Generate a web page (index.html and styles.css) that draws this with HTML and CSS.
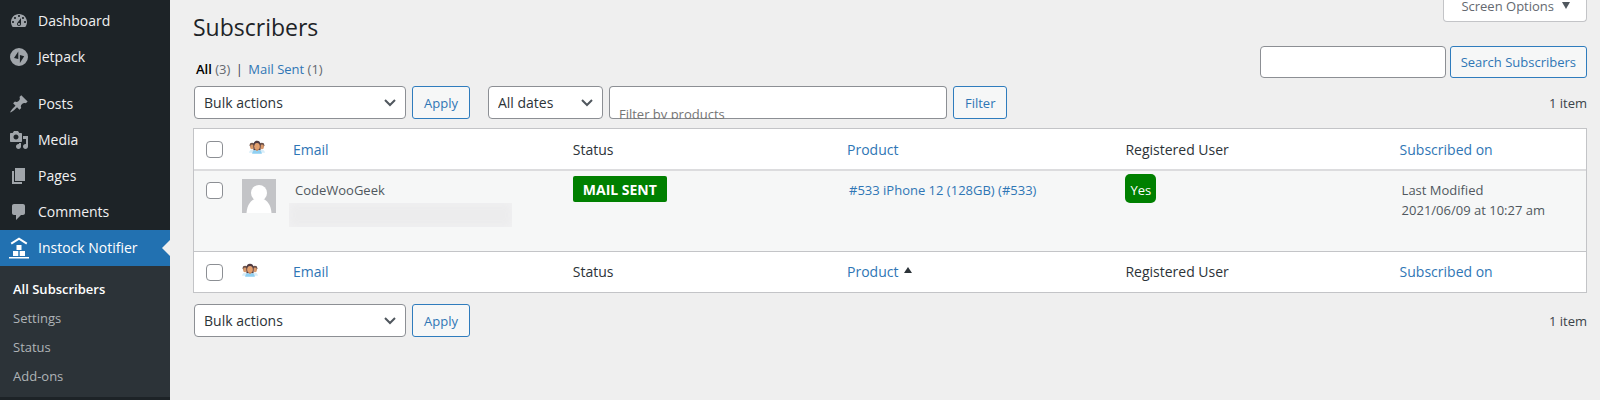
FILE: index.html
```html
<!DOCTYPE html>
<html lang="en">
<head>
<meta charset="utf-8">
<title>Subscribers</title>
<link rel="stylesheet" href="styles.css">
</head>
<body>
<svg class="sprite" aria-hidden="true">
  <symbol id="people" viewBox="0 0 18 16">
    <circle cx="3.5" cy="5.5" r="2.8" fill="#6b5149"/>
    <circle cx="14.5" cy="5.5" r="2.8" fill="#6b5149"/>
    <ellipse cx="3.4" cy="7.3" rx="2.2" ry="2.7" fill="#d99a6c"/>
    <ellipse cx="14.6" cy="7.3" rx="2.2" ry="2.7" fill="#d99a6c"/>
    <path d="M0 14c.5-3 2-3.600 4-3.600h10c2 0 3.500.6 4 3.600z" fill="#d8edf8"/>
    <path d="M5 11V5C5 2 6.500 .5 9 .5S13 2 13 5v6z" fill="#4f3b42"/>
    <ellipse cx="9" cy="7" rx="3.2" ry="4" fill="#e3a06f"/>
    <path d="M8 10h2v2H8z" fill="#cf8b5b"/>
    <path d="M3.500 15c.2-3 1.500-4 4-4L9 12.200l1.500-1.200c2.500 0 3.800 1 4 4z" fill="#8fd0f2"/>
  </symbol>
</svg>
<div class="layout">
  <nav class="sidebar" aria-label="Main menu">
    <ul class="menu">
      <li><a class="menu-link" href="#"><svg class="icon" viewBox="0 0 20 20"><path d="M3.760 16h12.480c1.100-1.370 1.760-3.110 1.760-5 0-4.420-3.580-8-8-8s-8 3.580-8 8c0 1.890.66 3.630 1.760 5zM10 4c.55 0 1 .45 1 1s-.45 1-1 1-1-.45-1-1 .45-1 1-1zM6 6c.55 0 1 .45 1 1s-.45 1-1 1-1-.45-1-1 .45-1 1-1zm8 0c.55 0 1 .45 1 1s-.45 1-1 1-1-.45-1-1 .45-1 1-1zm-5.370 5.550L12 7v6c0 1.100-.9 2-2 2s-2-.9-2-2c0-.57.24-1.080.63-1.450zM4 10c.55 0 1 .45 1 1s-.45 1-1 1-1-.45-1-1 .45-1 1-1zm12 0c.55 0 1 .45 1 1s-.45 1-1 1-1-.45-1-1 .45-1 1-1zm-5 3c0-.55-.45-1-1-1s-1 .45-1 1 .45 1 1 1 1-.45 1-1z"/></svg>Dashboard</a></li>
      <li><a class="menu-link" href="#"><svg class="icon" viewBox="0 0 20 20"><path fill-rule="evenodd" d="M10 1a9 9 0 1 0 0 18 9 9 0 0 0 0-18zM9.300 4.500v7.500L5 10.900zM10.900 8.100l4.300 1.100-4.300 6.900z"/></svg>Jetpack</a></li>
      <li class="group-start"><a class="menu-link" href="#"><svg class="icon" viewBox="0 0 20 20"><path d="M10.440 3.020l1.820-1.820 6.360 6.350-1.830 1.820c-1.050-.68-2.480-.57-3.410.36l-.75.75c-.92.93-1.040 2.350-.35 3.410l-1.830 1.820-2.410-2.410-2.800 2.790c-.42.42-3.380 2.710-3.800 2.290s1.860-3.390 2.280-3.810l2.790-2.790L4.100 9.360l1.830-1.820c1.050.69 2.480.57 3.400-.36l.75-.75c.93-.92 1.050-2.350.36-3.410z"/></svg>Posts</a></li>
      <li><a class="menu-link" href="#"><svg class="icon" viewBox="0 0 20 20"><path d="M13 11V4c0-.55-.45-1-1-1h-1.670L9 1H5L3.670 3H2c-.55 0-1 .45-1 1v7c0 .55.45 1 1 1h10c.55 0 1-.45 1-1zM7 4.500c1.380 0 2.500 1.120 2.500 2.500S8.380 9.500 7 9.500 4.500 8.380 4.500 7 5.620 4.500 7 4.500zM14 6h5v10.500c0 1.380-1.120 2.500-2.500 2.500S14 17.880 14 16.500s1.120-2.500 2.500-2.500c.17 0 .34.02.5.05V9h-3V6zm-4 8.050V13h2v3.500c0 1.380-1.120 2.500-2.500 2.500S7 17.880 7 16.500 8.120 14 9.500 14c.17 0 .34.02.5.05z"/></svg>Media</a></li>
      <li><a class="menu-link" href="#"><svg class="icon" viewBox="0 0 20 20"><path d="M6 15V2h10v13H6zm-1 1h8v2H3V5h2v11z"/></svg>Pages</a></li>
      <li><a class="menu-link" href="#"><svg class="icon" viewBox="0 0 20 20"><path d="M5 2h9c1.100 0 2 .9 2 2v7c0 1.100-.9 2-2 2h-2l-5 5v-5H5c-1.100 0-2-.9-2-2V4c0-1.100.9-2 2-2z"/></svg>Comments</a></li>
      <li>
        <a class="menu-link current" href="#"><svg class="icon" viewBox="0 0 20 20"><path d="M2.200 5.700L10 .7l7.800 5" fill="none" stroke="#fff" stroke-width="2"/><path d="M7.500 7h5v5h-5zM4 13h5.300v5H4zM10.700 13H16v5h-5.300zM0 19h20v1.500H0z"/></svg>Instock Notifier</a>
        <ul class="submenu">
          <li><a class="active" href="#">All Subscribers</a></li>
          <li><a href="#">Settings</a></li>
          <li><a href="#">Status</a></li>
          <li><a href="#">Add-ons</a></li>
        </ul>
      </li>
    </ul>
  </nav>

  <main class="content">
    <header class="page-head">
      <div class="head-left">
        <h1>Subscribers</h1>
        <div class="views"><a class="view-current" href="#">All</a> <span class="count">(3)</span> <span class="bar">|</span> <a href="#">Mail Sent</a> <span class="count">(1)</span></div>
      </div>
      <div class="head-right">
        <button class="screen-options" type="button">Screen Options <svg class="caret" viewBox="0 0 8 7"><path d="M0 0h8L4 7z"/></svg></button>
        <form class="search">
          <input class="field" type="search" aria-label="Search Subscribers">
          <button class="button" type="button">Search Subscribers</button>
        </form>
      </div>
    </header>

    <div class="toolbar">
      <select class="select bulk" aria-label="Bulk action"><option>Bulk actions</option></select>
      <button class="button" type="button">Apply</button>
      <select class="select dates" aria-label="Filter by date"><option>All dates</option></select>
      <input class="products" type="text" placeholder="Filter by products" aria-label="Filter by products">
      <button class="button" type="button">Filter</button>
      <span class="total">1 item</span>
    </div>

    <table class="list">
      <colgroup><col class="c-check"><col class="c-icon"><col class="c-email"><col class="c-status"><col class="c-product"><col class="c-user"><col></colgroup>
      <thead>
        <tr>
          <th><input type="checkbox" aria-label="Select all"></th>
          <th class="icon-head"><svg class="people"><use href="#people"/></svg></th>
          <th><a href="#">Email</a></th>
          <th>Status</th>
          <th><a href="#">Product</a></th>
          <th>Registered User</th>
          <th><a href="#">Subscribed on</a></th>
        </tr>
      </thead>
      <tbody>
        <tr>
          <td><input type="checkbox" aria-label="Select CodeWooGeek"></td>
          <td class="avatar-cell"><svg class="avatar" viewBox="0 0 34 34"><path fill="#c3c4c7" d="M0 0h34v34H0z"/><circle cx="17" cy="14" r="8" fill="#fff"/><path fill="#fff" d="M4.500 34C5 26 9 21 13 20h8c4 1 8 6 8.500 14z"/></svg></td>
          <td class="text">CodeWooGeek<div class="redacted"></div></td>
          <td><span class="badge sent">MAIL SENT</span></td>
          <td class="text"><a href="#">#533 iPhone 12 (128GB) (#533)</a></td>
          <td><span class="badge yes">Yes</span></td>
          <td class="text">Last Modified<br>2021/06/09 at 10:27 am</td>
        </tr>
      </tbody>
      <tfoot>
        <tr>
          <th><input type="checkbox" aria-label="Select all"></th>
          <th><svg class="people"><use href="#people"/></svg></th>
          <th><a href="#">Email</a></th>
          <th>Status</th>
          <th><a href="#">Product <svg class="sort" viewBox="0 0 8 6"><path d="M4 0l4 6H0z"/></svg></a></th>
          <th>Registered User</th>
          <th><a href="#">Subscribed on</a></th>
        </tr>
      </tfoot>
    </table>

    <div class="toolbar bottom">
      <select class="select bulk" aria-label="Bulk action"><option>Bulk actions</option></select>
      <button class="button" type="button">Apply</button>
      <span class="total">1 item</span>
    </div>
  </main>
</div>
</body>
</html>
```
FILE: styles.css
```css
* { box-sizing: border-box; }

body {
  margin: 0;
  background: #efefef;
  color: #3c434a;
  font: 13px/20px "Segoe UI", "Open Sans", "Noto Sans", sans-serif;
}

a { color: #2f76b5; text-decoration: none; }
button, input, select { font-family: inherit; }
ul { margin: 0; padding: 0; list-style: none; }

.sprite { display: none; }

.layout { display: flex; min-height: 100vh; }

/* Sidebar */
.sidebar {
  flex: none;
  width: 170px;
  background: #1d2327;
}

.menu { padding-top: 3px; }
.group-start { margin-top: 11px; }

.menu-link {
  display: flex;
  align-items: center;
  gap: 9px;
  height: 36px;
  padding-left: 9px;
  color: #f0f0f1;
  font-size: 14px;
}

.icon { width: 20px; height: 20px; fill: #a0a5aa; overflow: visible; }

.current { position: relative; background: #2271b1; color: #fff; }
.current .icon { fill: #fff; }
.current::after {
  content: "";
  position: absolute;
  right: 0;
  top: 10px;
  border: 8px solid transparent;
  border-right-color: #efefef;
  border-left-width: 0;
}

.submenu { padding: 8px 0 7px; background: #2c3338; }
.submenu a {
  display: block;
  padding: 5px 13px 4px;
  color: #afb3b7;
  font-size: 13px;
}
.submenu .active { color: #fff; font-weight: 600; }

/* Page head */
.content { flex: 1; min-width: 0; padding: 0 13px 0 23px; }

.page-head { display: flex; justify-content: space-between; }

h1 {
  margin: 0;
  padding-top: 10px;
  color: #1d2327;
  font-size: 23px;
  font-weight: 400;
  line-height: 34px;
}

.views { padding: 15px 0 0 3px; }
.view-current { color: #000; font-weight: 600; }
.count { color: #646970; }
.bar { margin: 0 2px; }

.head-right { display: flex; flex-direction: column; align-items: flex-end; gap: 24px; }

.screen-options {
  display: flex;
  align-items: center;
  gap: 8px;
  height: 22px;
  padding: 0 16px 10px 17px;
  border: 1px solid #c3c4c7;
  border-top: 0;
  border-radius: 0 0 4px 4px;
  background: #fff;
  color: #646970;
  font-size: 13px;
  line-height: 12px;
}
.caret { width: 8px; height: 7px; fill: #50575e; }

.search { display: flex; gap: 4px; }

.field, .products, .select {
  border: 1px solid #8c8f94;
  border-radius: 4px;
  background: #fff;
}
.field { width: 186px; height: 32px; }

.button {
  padding: 0 11px;
  border: 1px solid #2f7cbd;
  border-radius: 3px;
  background: #f6f7f7;
  color: #2f76b5;
  font-size: 13px;
}
.search .button { padding: 0 10px; }

/* Toolbars */
.toolbar { display: flex; align-items: stretch; gap: 6px; height: 33px; margin-top: 7px; padding-left: 1px; }
.bottom { margin-top: 11px; }
.total { margin-left: auto; align-self: center; }

.select {
  appearance: none;
  padding: 0 24px 0 9px;
  color: #2c3338;
  font-size: 14px;
  background: #fff url("data:image/svg+xml,%3Csvg xmlns='http://www.w3.org/2000/svg' viewBox='0 0 12 8'%3E%3Cpath d='M1 1l5 5 5-5' fill='none' stroke='%2350575e' stroke-width='2'/%3E%3C/svg%3E") no-repeat right 9px center / 12px 8px;
}
.bulk { width: 212px; }
.dates { width: 115px; margin-left: 12px; }

.products {
  width: 338px;
  padding: 22px 10px 0;
  border: 0;
  box-shadow: inset 0 0 0 1px #8c8f94;
  font-size: 13px;
}
.products::placeholder { color: #757575; opacity: 1; }

/* List table */
.list {
  width: 100%;
  margin-top: 9px;
  table-layout: fixed;
  border: 1px solid #c3c4c7;
  border-spacing: 0;
  background: #fff;
}
.c-check { width: 38px; }
.c-icon { width: 51px; }
.c-email { width: 20.1%; }
.c-product { width: 20%; }
.c-status, .c-user { width: 19.7%; }

.list th, .list td { padding: 0 10px; text-align: left; vertical-align: top; }
.list th { height: 41px; font-size: 14px; font-weight: 400; vertical-align: middle; color: #2c3338; }
.list th:first-child, .list td:first-child { padding: 0 0 0 12px; }
.list thead th { height: 42px; padding-top: 1px; border-bottom: 2px solid #dcdcde; }
.list tfoot th { border-top: 1px solid #c3c4c7; }
.list td { height: 80px; background: #f6f7f7; color: #50575e; }
.list .icon-head { padding-left: 17px; }
.list .text { padding: 9px 0 0 12px; }
.list .avatar-cell { padding-top: 8px; }

.list input {
  appearance: none;
  display: block;
  width: 17px;
  height: 17px;
  margin: 0;
  border: 1px solid #8c8f94;
  border-radius: 4px;
  background: #fff;
}
.list td input { margin-top: 11px; }

.people { display: block; width: 16px; height: 15px; margin-bottom: 4px; }
.avatar { display: block; width: 34px; height: 34px; }
.sort { width: 8px; height: 6px; margin: 0 0 4px 2px; fill: #2c3338; }

.redacted {
  width: 223px;
  height: 24px;
  margin: 3px 0 0 -6px;
  background: #ececed;
  box-shadow: inset 0 0 8px #f2f2f3;
}

.badge { display: inline-block; background: #008000; color: #fff; }
.sent { margin-top: 5px; padding: 4px 10px 2px; border-radius: 2px; font-size: 14px; font-weight: 700; }
.yes { margin-top: 3px; padding: 6px 5px 3px; border-radius: 5px; }
```
